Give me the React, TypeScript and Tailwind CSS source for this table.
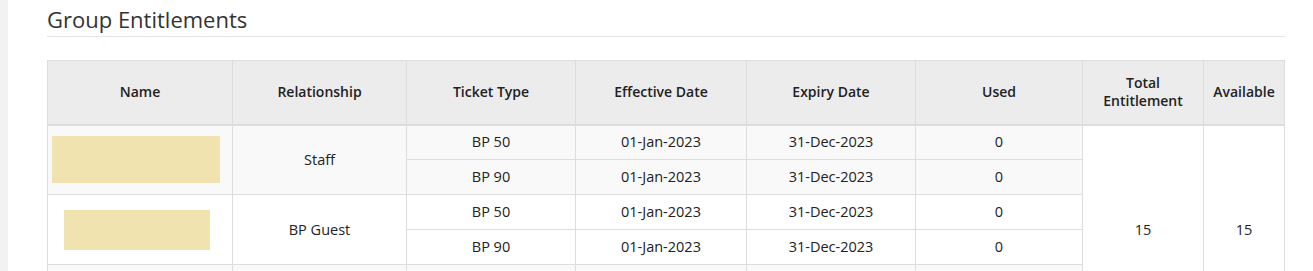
import React from 'react';

type Row = { ticket: string; effective: string; expiry: string; used: string };
type Group = { relationship: string; block: string | null; rows: Row[]; striped: boolean };

const twoRows: Row[] = [
    { ticket: 'BP 50', effective: '01-Jan-2023', expiry: '31-Dec-2023', used: '0' },
    { ticket: 'BP 90', effective: '01-Jan-2023', expiry: '31-Dec-2023', used: '0' },
];

const blankRows: Row[] = [
    { ticket: '', effective: '', expiry: '', used: '' },
    { ticket: '', effective: '', expiry: '', used: '' },
];

// name cells are redacted with a yellow block in the screenshot
const groups: Group[] = [
    { relationship: 'Staff', block: 'ml-0 w-[168px] h-[47px]', striped: true, rows: twoRows },
    { relationship: 'BP Guest', block: 'ml-[12px] w-[146px] h-[40px]', striped: false, rows: twoRows },
    { relationship: '', block: null, striped: true, rows: blankRows },
];

const th = 'border border-[#dddddd] border-b-2 px-2 text-[14px] font-semibold text-center align-middle';
const td = 'border border-[#dddddd] px-2 h-[35px] text-center align-middle';

export default function App() {
    const totalRows = groups.reduce((n, g) => n + g.rows.length, 0);

    return (
        <div className="flex h-[271px] overflow-hidden bg-white text-[#222] font-['Open_Sans',sans-serif]">
            <div className="w-2 shrink-0 bg-[#f2f2f2]" />
            <div className="pl-[39px] pr-[28px] flex-1">
                <h2 className="pt-[5px] pb-[3px] text-[22px] leading-[28px] text-[#333] border-b border-[#e5e5e5]">
                    Group Entitlements
                </h2>
                <table className="mt-[23px] w-full border-collapse table-fixed text-[14.5px] leading-[18px]">
                    <colgroup>
                        <col className="w-[185px]" />
                        <col className="w-[174px]" />
                        <col className="w-[169px]" />
                        <col className="w-[171px]" />
                        <col className="w-[169px]" />
                        <col className="w-[167px]" />
                        <col className="w-[121px]" />
                        <col className="w-[81px]" />
                    </colgroup>
                    <thead className="bg-[#ececec]">
                        <tr className="h-[64px]">
                            <th className={th}>Name</th>
                            <th className={th}>Relationship</th>
                            <th className={th}>Ticket Type</th>
                            <th className={th}>Effective Date</th>
                            <th className={th}>Expiry Date</th>
                            <th className={th}>Used</th>
                            <th className={th}>Total<br />Entitlement</th>
                            <th className={th}>Available</th>
                        </tr>
                    </thead>
                    <tbody>
                        {groups.map((g, gi) =>
                            g.rows.map((r, ri) => (
                                <tr key={`${gi}-${ri}`} className={g.striped ? 'bg-[#f9f9f9]' : 'bg-white'}>
                                    {ri === 0 && (
                                        <td rowSpan={g.rows.length} className="border border-[#dddddd] p-1 align-middle">
                                            {g.block && <div className={`bg-[#f0e3b0] ${g.block}`} />}
                                        </td>
                                    )}
                                    {ri === 0 && (
                                        <td rowSpan={g.rows.length} className={td}>{g.relationship}</td>
                                    )}
                                    <td className={td}>{r.ticket}</td>
                                    <td className={td}>{r.effective}</td>
                                    <td className={td}>{r.expiry}</td>
                                    <td className={td}>{r.used}</td>
                                    {gi === 0 && ri === 0 && (
                                        <>
                                            <td rowSpan={totalRows} className="border border-[#dddddd] px-2 text-center align-middle bg-white">15</td>
                                            <td rowSpan={totalRows} className="border border-[#dddddd] px-2 text-center align-middle bg-white">15</td>
                                        </>
                                    )}
                                </tr>
                            ))
                        )}
                    </tbody>
                </table>
            </div>
        </div>
    );
}
